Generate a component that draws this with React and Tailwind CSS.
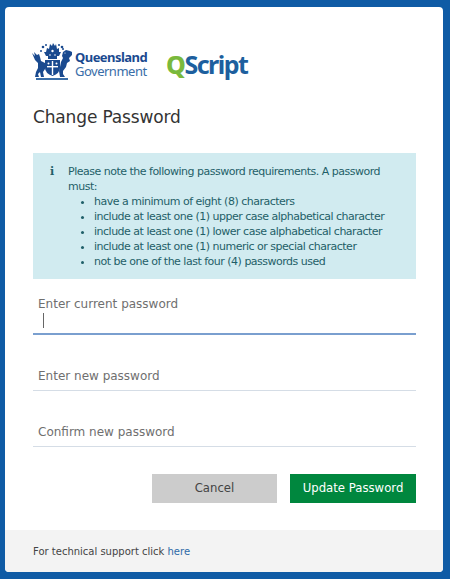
import React from 'react';

const font = { fontFamily: '"DejaVu Sans", Verdana, sans-serif' };
const logoFont = { fontFamily: '"Noto Sans", sans-serif' };

function Crest() {
  return (
    <svg width="41" height="38" viewBox="0 0 41 38" className="-ml-[1px] shrink-0">
      <g fill="#1a4a8f">
        {/* left supporter */}
        <path d="M0 10 L3 13 L2 9 L5 12 L7 11 L8 14 L9 18 L13 20 L13 26 L11 29 L12 34 L9 34 L8 29 L6 31 L7 34 L3 34 L4 29 L6 25 L6 20 L3 17 Z" />
        {/* right supporter */}
        <path d="M40 9 L38 8 L34 7 L31 9 L30 13 L31 15 L29 19 L28 24 L27 28 L28 34 L33 34 L31 31 L31 28 L34 24 L35 20 L38 18 L37 15 L40 12 Z" />
        {/* shield */}
        <path d="M13 17 H28 V25 Q28 30 20.5 33 Q13 30 13 25 Z" />
        {/* crown and plumes */}
        <path d="M15 5 L17 6 L18 1 L20 3 L21 0 L23 3 L24 1 L25 6 L27 5 L27 9 L29 9 L27 13 L25 13 L25 16 H16 L16 13 L14 13 L12 9 L14 9 Z" />
        <circle cx="11" cy="4" r="1.3" />
        <circle cx="14" cy="2" r="1" />
        <circle cx="27" cy="2" r="1" />
        <circle cx="30" cy="4" r="1.3" />
        <circle cx="9" cy="8" r="1" />
        <circle cx="31" cy="6" r="1" />
      </g>
      <rect x="4" y="35" width="32" height="2" fill="#3a6ea8" />
      <g fill="#ffffff">
        <rect x="19.8" y="18" width="1.4" height="14" />
        <rect x="15" y="23" width="11" height="1.4" />
        <circle cx="16.5" cy="20.5" r="1" />
        <circle cx="24.5" cy="20.5" r="1" />
        <circle cx="20.5" cy="8" r="1.2" />
        <circle cx="18" cy="12" r="0.8" />
        <circle cx="23" cy="12" r="0.8" />
        <circle cx="33" cy="10" r="0.6" />
      </g>
    </svg>
  );
}

function Field({ label, active, className }) {
  return (
    <div className={`border-b ${active ? 'border-b-2 border-[#7a9fcf]' : 'border-[#d5dde6]'} ${className}`}>
      <div className="pl-[5px] text-[12px] leading-[16px] text-[#6f6f6f]">{label}</div>
      {active && <div className="mb-[5px] ml-[10px] mt-[1px] h-[15px] w-[1px] bg-[#666666]" />}
    </div>
  );
}

export default function App() {
  return (
    <div className="h-[579px] w-[450px] overflow-hidden bg-[#0f5ba5] pl-[5px] pr-[7px] pt-[7px]" style={font}>
      <div className="flex h-[565px] w-[438px] flex-col overflow-hidden rounded-[4px] bg-white">
        <div className="flex-1 pl-[28px] pr-[27px] pt-[36px]">
          <div className="flex h-[38px] items-center">
            <Crest />
            <div className="ml-[2px] mt-[4px] flex flex-col" style={logoFont}>
              <span className="text-[13px] font-bold leading-[14px] tracking-[-0.55px] text-[#1a4a8f]">Queensland</span>
              <span className="text-[13px] leading-[14px] tracking-[-0.5px] text-[#3a6ea8]">Government</span>
            </div>
            <div className="ml-[19px] mt-[3px] text-[25px] font-bold leading-[30px] tracking-[-1.5px]" style={logoFont}>
              <span className="font-extrabold text-[#7ab93c]">Q</span>
              <span className="text-[#1d5f9e]">Script</span>
            </div>
          </div>
          <h1 className="mt-[24px] text-[17px] font-normal leading-[24px] tracking-[-0.15px] text-[#333333]">Change Password</h1>
          <div className="mt-[24px] flex h-[126px] bg-[#d1ebf0] pl-[17px] pr-[10px] pt-[11px] text-[11px] leading-[15px] tracking-[-0.5px] text-[#1f5f68]">
            <span className="w-[18px] shrink-0 font-bold" style={{ fontFamily: '"DejaVu Serif", serif' }}>i</span>
            <div>
              <p>Please note the following password requirements. A password must:</p>
              <ul className="list-disc pl-[26px]">
                <li>have a minimum of eight (8) characters</li>
                <li>include at least one (1) upper case alphabetical character</li>
                <li>include at least one (1) lower case alphabetical character</li>
                <li>include at least one (1) numeric or special character</li>
                <li>not be one of the last four (4) passwords used</li>
              </ul>
            </div>
          </div>
          <Field label="Enter current password" active className="mt-[17px]" />
          <Field label="Enter new password" className="mt-[33px] pb-[6px]" />
          <Field label="Confirm new password" className="mt-[33px] pb-[6px]" />
          <div className="mt-[27px] flex justify-end gap-[13px] text-[11.7px]">
            <button className="h-[29px] w-[125px] bg-[#cccccc] text-[#444444]">Cancel</button>
            <button className="h-[29px] w-[126px] bg-[#00873e] text-white">Update Password</button>
          </div>
        </div>
        <div className="flex h-[42px] items-center bg-[#f3f3f3] px-[28px] text-[10px] text-[#444444]">
          <span>For technical support click <span className="text-[#2e6aa8]">here</span></span>
        </div>
      </div>
    </div>
  );
}
